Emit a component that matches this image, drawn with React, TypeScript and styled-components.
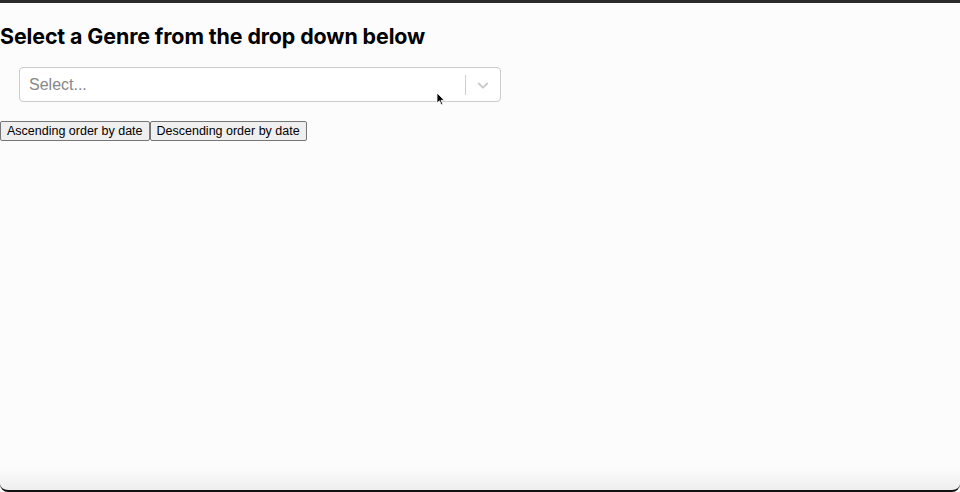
import * as React from 'react'
import styled, { createGlobalStyle } from 'styled-components'

const GlobalStyle = createGlobalStyle`
  html, body {
    margin: 0;
    padding: 0;
    background: #fcfcfc;
  }
`

const Window = styled.div`
  position: relative;
  width: 960px;
  height: 492px;
  box-sizing: border-box;
  border-top: 3px solid #2b2b2b;
  background: #fcfcfc;
  overflow: hidden;
  display: flex;
  flex-direction: column;
`

const Page = styled.div`
  flex: 1;
  font-family: 'Liberation Sans', Arial, sans-serif;
  color: #000;
`

const Heading = styled.h2`
  margin: 20px 0 18px;
  font-family: Inter, 'Liberation Sans', sans-serif;
  font-size: 21.4px;
  font-weight: 700;
  letter-spacing: -0.1px;
`

const SelectWrap = styled.div`
  margin-left: 19px;
  width: 482px;
`

const Control = styled.div`
  display: flex;
  align-items: center;
  height: 35px;
  box-sizing: border-box;
  border: 1px solid #cccccc;
  border-radius: 4px;
  background: #fff;
`

const Placeholder = styled.div`
  flex: 1;
  padding-left: 9px;
  font-family: 'Liberation Sans', Arial, sans-serif;
  font-size: 16px;
  color: #878787;
`

const Separator = styled.span`
  width: 1px;
  height: 20px;
  background: #cccccc;
`

const Indicator = styled.div`
  display: flex;
  align-items: center;
  padding: 8px;
  color: #cccccc;
`

const ButtonRow = styled.div`
  display: flex;
  margin-top: 19px;
`

const Button = styled.button`
  font-family: 'Liberation Sans', Arial, sans-serif;
  font-size: 12.5px;
  height: 20px;
  padding: 1px 6px;
  background: #efefef;
  border: 1px solid #767676;
  border-radius: 2px;
  color: #000;
`

const Cursor = styled.svg`
  position: absolute;
  left: 436px;
  top: 89px;
`

const BottomEdge = styled.div`
  height: 22px;
  background: linear-gradient(#fcfcfc, #eeeeee);
  border-bottom: 2px solid #111;
  border-radius: 0 0 8px 8px;
`

const Chevron = () => (
  <svg width='18' height='18' viewBox='0 0 20 20' fill='currentColor'>
    <path d='M4.516 7.548c0.436-0.446 1.043-0.481 1.576 0l3.908 3.747 3.908-3.747c0.533-0.481 1.141-0.446 1.574 0 0.436 0.445 0.408 1.197 0 1.615-0.406 0.418-4.695 4.502-4.695 4.502-0.217 0.223-0.502 0.335-0.787 0.335s-0.57-0.112-0.789-0.335c0 0-4.287-4.084-4.695-4.502s-0.436-1.170 0-1.615z' />
  </svg>
)

const App: React.FC = () => {
  return (
    <Window>
      <GlobalStyle />
      <Page>
        <Heading>Select a Genre from the drop down below</Heading>
        <SelectWrap>
          <Control>
            <Placeholder>Select...</Placeholder>
            <Separator />
            <Indicator>
              <Chevron />
            </Indicator>
          </Control>
        </SelectWrap>
        <ButtonRow>
          <Button>Ascending order by date</Button>
          <Button>Descending order by date</Button>
        </ButtonRow>
      </Page>
      <BottomEdge />
      <Cursor width='10' height='14' viewBox='0 0 10 14'>
        <path d='M1 1 L1 11 L3.5 8.8 L5.3 12.8 L6.8 12.1 L5 8.3 L8.3 8.2 Z' fill='#000' stroke='#fff' strokeWidth='0.8' />
      </Cursor>
    </Window>
  )
}

export default App
